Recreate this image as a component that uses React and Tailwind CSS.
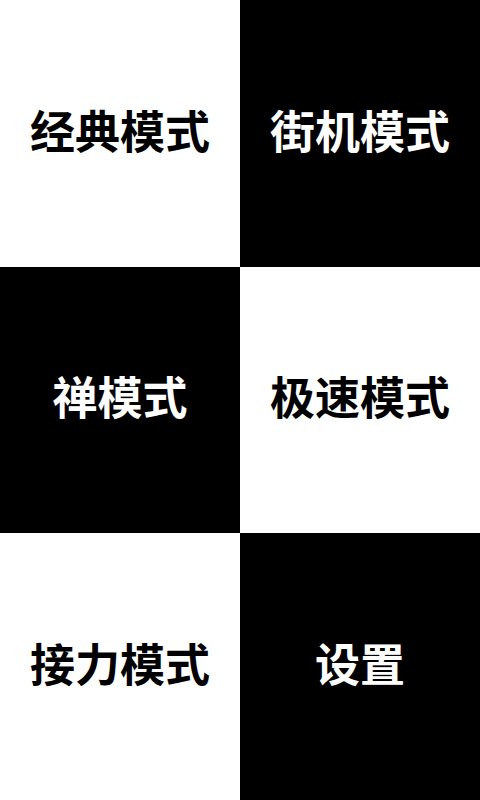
import React from 'react'

const cells = [
  { label: '经典模式', dark: false },
  { label: '街机模式', dark: true },
  { label: '禅模式', dark: true },
  { label: '极速模式', dark: false },
  { label: '接力模式', dark: false },
  { label: '设置', dark: true },
]

export default function App() {
  return (
    <div
      className="grid h-[800px] w-[480px] grid-cols-2 grid-rows-3"
      style={{ fontFamily: '"Noto Sans CJK SC", "Noto Sans", sans-serif' }}
    >
      {cells.map((c) => (
        <div
          key={c.label}
          className={
            c.dark
              ? 'flex items-center justify-center bg-black text-white'
              : 'flex items-center justify-center bg-white text-black'
          }
        >
          <span className="pb-2 text-[45px] font-bold leading-none">{c.label}</span>
        </div>
      ))}
    </div>
  )
}
